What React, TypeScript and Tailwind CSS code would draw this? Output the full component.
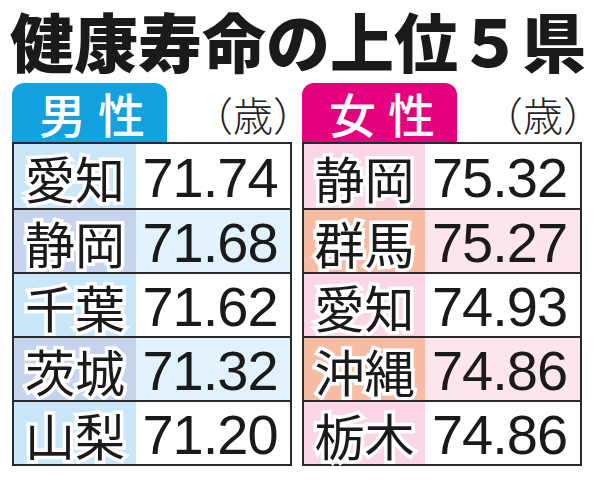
import React from "react";

const jp = { fontFamily: '"Noto Sans CJK JP", "Noto Sans", sans-serif' };
const num = { fontFamily: '"Liberation Sans", Arial, sans-serif' };

type Row = { name: string; val: string; label: string; value: string };

const male: Row[] = [
  { name: "愛知", val: "71.74", label: "bg-[#c9e7f8]", value: "bg-white" },
  { name: "静岡", val: "71.68", label: "bg-[#c7d4ee]", value: "bg-[#e2f2fc]" },
  { name: "千葉", val: "71.62", label: "bg-[#c9e7f8]", value: "bg-white" },
  { name: "茨城", val: "71.32", label: "bg-[#c7d4ee]", value: "bg-[#e2f2fc]" },
  { name: "山梨", val: "71.20", label: "bg-[#c9e7f8]", value: "bg-white" },
];

const female: Row[] = [
  { name: "静岡", val: "75.32", label: "bg-[#fad6e6]", value: "bg-white" },
  { name: "群馬", val: "75.27", label: "bg-[#f8bba3]", value: "bg-[#fde5ef]" },
  { name: "愛知", val: "74.93", label: "bg-[#fad6e6]", value: "bg-white" },
  { name: "沖縄", val: "74.86", label: "bg-[#f8bba3]", value: "bg-[#fde5ef]" },
  { name: "栃木", val: "74.86", label: "bg-[#fad6e6]", value: "bg-white" },
];

function Table({ title, tab, rows, labelW }: { title: [string, string]; tab: string; rows: Row[]; labelW: string }) {
  return (
    <div className="flex flex-col w-[280px]">
      <div className="flex items-end h-[60px]">
        <div
          className={`w-[155px] shrink-0 h-[59px] rounded-t-[12px] ${tab} text-white text-[47px] leading-[59px] pl-[27px] flex gap-[12px] whitespace-nowrap font-medium`}
          style={jp}
        >
          <span>{title[0]}</span>
          <span>{title[1]}</span>
        </div>
        <div
          className="ml-[46px] mb-[6px] text-[40px] leading-[44px] whitespace-nowrap text-[#222] font-light [font-feature-settings:'halt']"
          style={jp}
        >
          （歳）
        </div>
      </div>
      <div className="border-2 border-[#2a2a2a] flex flex-col">
        {rows.map((r, i) => (
          <div key={i} className={`flex h-[64px] ${i > 0 ? "border-t-2 border-[#2a2a2a]" : ""}`}>
            <div
              className={`${labelW} ${r.label} flex items-center justify-center text-[50px] leading-none text-[#1a1a1a] [-webkit-text-stroke:7px_white] [paint-order:stroke_fill] pt-[2px]`}
              style={jp}
            >
              {r.name}
            </div>
            <div
              className={`flex-1 ${r.value} flex items-center justify-center text-[56px] leading-none text-[#1a1a1a] tracking-[-1px] pt-[3px] pr-[6px]`}
              style={num}
            >
              {r.val}
            </div>
          </div>
        ))}
      </div>
    </div>
  );
}

export default function App() {
  return (
    <div className="w-[600px] h-[480px] bg-white overflow-hidden">
      <div className="pl-[10px] pt-[3px] h-[80px] text-[64px] leading-[72px] whitespace-nowrap font-black text-[#1a1a1a]" style={jp}>
        健康寿命の上位５県
      </div>
      <div className="flex gap-[10px] pl-[12px] mt-[2px]">
        <Table title={["男", "性"]} tab="bg-[#13a2df]" rows={male} labelW="w-[122px]" />
        <Table title={["女", "性"]} tab="bg-[#e5007f]" rows={female} labelW="w-[121px]" />
      </div>
    </div>
  );
}
